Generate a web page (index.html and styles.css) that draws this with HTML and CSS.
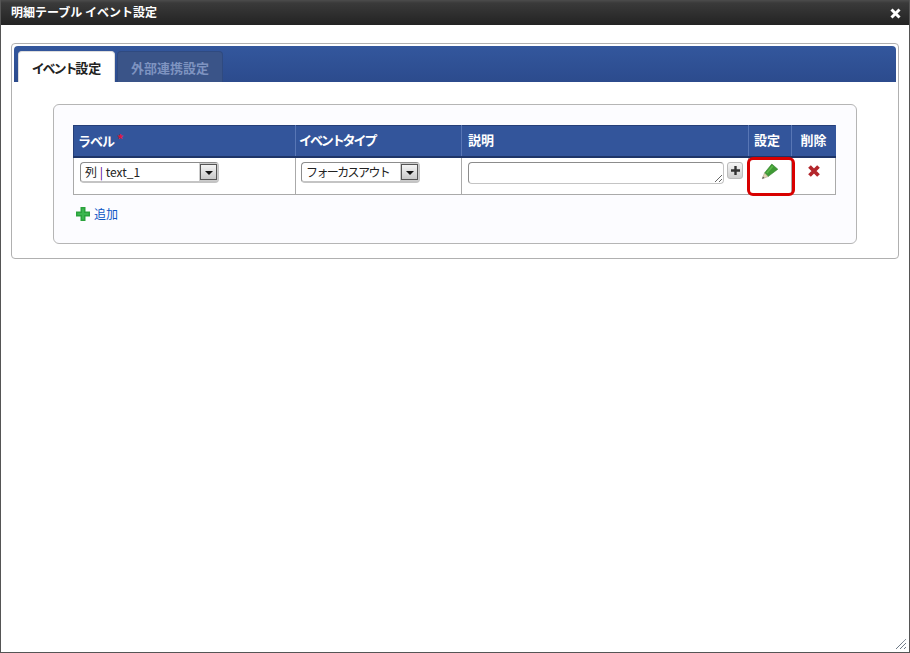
FILE: index.html
```html
<!DOCTYPE html>
<html lang="ja">
<head>
<meta charset="utf-8">
<title>明細テーブル イベント設定</title>
<link rel="stylesheet" href="styles.css">
</head>
<body>
<div class="window">
  <header class="titlebar">
    <span class="title">明細テーブル イベント設定</span>
    <svg class="close" width="11" height="11" viewBox="0 0 11 11"><path d="M1.5 1.5l8 8M9.5 1.5l-8 8" stroke="#fff" stroke-width="3"/></svg>
  </header>
  <main class="content">
    <section class="panel">
      <nav class="tabs">
        <span class="tab active"><span class="kana-wide">イベント</span>設定</span>
        <span class="tab">外部連携設定</span>
      </nav>
      <div class="inner">
        <table class="grid">
          <colgroup><col class="c1"><col class="c2"><col class="c3"><col class="c4"><col class="c5"></colgroup>
          <thead>
            <tr><th class="h1"><span class="kana">ラベル</span> <span class="req">*</span></th><th class="h2"><span class="kana-wide">イベントタイプ</span></th><th class="h3">説明</th><th class="ctr h4">設定</th><th class="ctr">削除</th></tr>
          </thead>
          <tbody>
            <tr>
              <td>
                <div class="select s1"><span class="val">列 <span class="pipe">|</span> text_1</span><span class="arrow"></span></div>
              </td>
              <td class="d2">
                <div class="select s2"><span class="val kana-tight">フォーカスアウト</span><span class="arrow"></span></div>
              </td>
              <td>
                <div class="desc">
                  <textarea class="area"></textarea>
                  <span class="plus"><svg width="11" height="11" viewBox="0 0 11 11"><path d="M5.5 1v9M1 5.5h9" stroke="#333" stroke-width="2.4"/></svg></span>
                </div>
              </td>
              <td class="ctr">
                <svg class="icon" width="18" height="18" viewBox="0 0 18 18">
                  <path d="M3.5 11L10.8 2l6 5.2L7 14.6z" fill="#3f9a34" stroke="#2e7d28" stroke-width=".6"/>
                  <path d="M5.2 10.6l6-7 1.2 1-6 7z" fill="#5cb84a"/>
                  <path d="M3.5 11L7 14.6 1.2 16.8z" fill="#e3d7b5" stroke="#a39a80" stroke-width=".5"/>
                  <path d="M1.2 16.8l.7-2.4 1.7 1.6z" fill="#555"/>
                </svg>
              </td>
              <td class="ctr">
                <svg class="icon x" width="14" height="14" viewBox="0 0 14 14"><path d="M2.5 2.5l9 9M11.5 2.5l-9 9" stroke="#b3262c" stroke-width="3.8"/></svg>
              </td>
            </tr>
          </tbody>
        </table>
        <a class="add">
          <svg width="14" height="14" viewBox="0 0 14 14"><path d="M7 0v14M0 7h14" stroke="#2aa23c" stroke-width="5"/><path d="M7 1.5v11M1.5 7h11" stroke="#3cb64f" stroke-width="2"/></svg>
          <span>追加</span>
        </a>
      </div>
    </section>
  </main>
  <svg class="grip" width="12" height="12" viewBox="0 0 12 12"><path d="M1 11L11 1M5 11l6-6M9 11l2-2" stroke="#345" stroke-width="1" stroke-dasharray="1 .5"/></svg>
  <div class="mark"></div>
</div>
</body>
</html>
```
FILE: styles.css
```css
* { box-sizing: border-box; }
html, body { margin: 0; height: 100%; }
body {
  font-family: "Noto Sans CJK JP", "Liberation Sans", sans-serif;
  font-size: 12px;
  color: #222;
  background: #fff;
  overflow: hidden;
}
.window {
  position: relative;
  width: 910px;
  height: 653px;
  border: 1px solid #555;
  border-top: 0;
  display: flex;
  flex-direction: column;
}
.titlebar {
  height: 25px;
  flex: none;
  display: flex;
  align-items: center;
  justify-content: space-between;
  padding: 0 8px 3px 10px;
  background: linear-gradient(#4c4c4c, #3a3a3a 12%, #232323);
  color: #fff;
  font-weight: 700;
  font-size: 12px;
}
.close { margin-top: 5px; }
.content { flex: 1; padding: 18px 10px 0; }
.panel {
  height: 216px;
  border: 1px solid #b0b0b0;
  border-radius: 4px;
  padding: 2px;
}
.tabs {
  height: 36px;
  display: flex;
  gap: 2px;
  align-items: flex-end;
  padding-left: 4px;
  background: linear-gradient(#33579d, #2c4b8d);
  border-radius: 4px 4px 0 0;
}
.tab {
  height: 31px;
  display: flex;
  align-items: center;
  justify-content: center;
  width: 106px;
  font-size: 13px;
  background: #3a5488;
  color: #7e93c0;
  font-weight: 700;
  border: 1px solid #2f4a80;
  border-bottom: 0;
  border-radius: 4px 4px 0 0;
}
.tab.active {
  width: 97px;
  background: #fff;
  color: #222;
  border-color: #ddd;
}
.kana { letter-spacing: -1px; }
.kana-wide { letter-spacing: -2.1px; }
.kana-tight { letter-spacing: -1.6px; white-space: nowrap; }
.inner {
  width: 804px;
  height: 140px;
  margin: 22px 0 0 39px;
  padding: 20px 19px 0;
  background: #fcfcff;
  border: 1px solid #b5b5b5;
  border-radius: 6px;
}
.grid {
  width: 762px;
  table-layout: fixed;
  border-collapse: collapse;
  background: #fff;
}
.c1 { width: 222px; }
.c2 { width: 166px; }
.c3 { width: 287px; }
.c4 { width: 43px; }
.c5 { width: 44px; }
.grid th {
  height: 31px;
  padding: 0 5px 3px;
  background: #33559b;
  color: #fff;
  font-size: 13px;
  font-weight: 700;
  text-align: left;
  border: 1px solid #5876b5;
  border-top: 1px solid #263f78;
  border-bottom: 2px solid #1e3568;
  border-left-color: #6481bd;
}
.grid th:first-child { border-left-color: #263f78; }
.grid th:last-child { border-right-color: #33559b; }
.grid th.h1, .grid th.h2 { padding-left: 4px; }
.grid th.h2 { padding-left: 3px; }
.grid th.h3 { padding-left: 6px; }
.grid th.ctr { text-align: center; padding: 0 0 3px; }
.grid th.h4 { padding-right: 6px; }
.grid td.ctr { text-align: center; padding: 0; }
.req { color: #e0143c; vertical-align: 2px; }
.grid td {
  height: 38px;
  padding: 4px 6px 0;
  vertical-align: top;
  border: 1px solid #aaa;
  border-top: 0;
}
.grid td.d2 { padding-left: 5px; }
.select {
  height: 21px;
  display: flex;
  align-items: center;
  justify-content: space-between;
  padding: 0 1px 0 4px;
  background: #fff;
  border: 1px solid #8c8c8c;
  border-right-color: #c4c4c4;
  border-bottom: 2px solid #c4c4c4;
  border-radius: 4px;
  color: #222;
}
.s1 { width: 139px; }
.s2 { width: 119px; }
.pipe { color: #52008c; }
.arrow {
  position: relative;
  flex: none;
  width: 17px;
  height: 16px;
  background: linear-gradient(#f4f4f4, #c8c8c8);
  border: 1px solid #555;
  outline: 1px solid #ccc;
}
.arrow::after {
  content: "";
  position: absolute;
  left: 4px;
  top: 6px;
  border: 4px solid transparent;
  border-top: 4px solid #111;
  border-bottom: 0;
}
.desc { display: flex; gap: 3px; }
.area {
  display: block;
  flex: none;
  width: 256px;
  height: 22px;
  margin: 0;
  padding: 2px;
  border: 1px solid #8c8c8c;
  border-right-color: #c4c4c4;
  border-bottom-color: #c4c4c4;
  border-radius: 4px;
  background: #fff;
}
.plus {
  flex: none;
  width: 16px;
  height: 17px;
  display: flex;
  align-items: center;
  justify-content: center;
  background: linear-gradient(#f6f6f6, #cfcfcf);
  border: 1px solid #bbb;
  border-radius: 3px;
}
.icon { display: block; margin: 4px auto 0; }
.icon.x { margin-top: 6px; }
.add {
  display: inline-flex;
  align-items: center;
  gap: 4px;
  margin: 10px 0 0 3px;
  color: #0b55c4;
}
.grip { position: absolute; right: 2px; bottom: 2px; }
.mark {
  position: absolute;
  left: 746px;
  top: 157px;
  width: 48px;
  height: 39px;
  border: 3px solid #d80000;
  border-radius: 6px;
}
```
